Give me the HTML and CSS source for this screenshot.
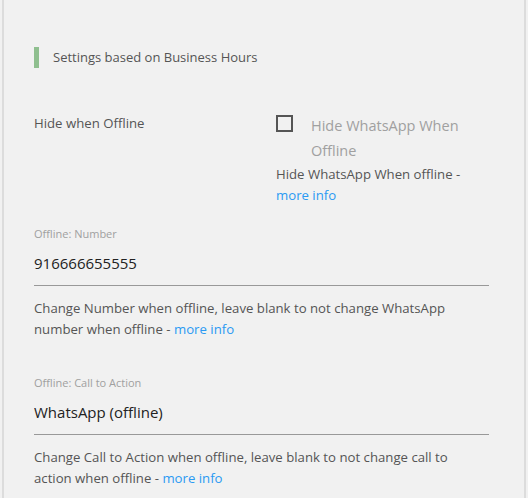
FILE: index.html
```html
<!DOCTYPE html>
<html>
<head>
    <title>Business Hours Settings</title>
    <link rel="stylesheet" href="styles.css">
</head>
<body>
    <div class="panel">
        <h3 class="section-title">Settings based on Business Hours</h3>

        <div class="row">
            <div class="row-label">Hide when Offline</div>
            <div class="row-field">
                <label class="check">
                    <input type="checkbox">
                    <span class="box"></span>
                    <span class="check-text">Hide WhatsApp When Offline</span>
                </label>
                <p class="help">Hide WhatsApp When offline - <a href="#">more info</a></p>
            </div>
        </div>

        <div class="field">
            <label class="field-label" for="offNumber">Offline: Number</label>
            <input class="field-input" type="text" id="offNumber" value="916666655555">
            <p class="help">Change Number when offline, leave blank to not change WhatsApp number when offline - <a href="#">more info</a></p>
        </div>

        <div class="field">
            <label class="field-label" for="offCta">Offline: Call to Action</label>
            <input class="field-input" type="text" id="offCta" value="WhatsApp (offline)">
            <p class="help">Change Call to Action when offline, leave blank to not change call to action when offline - <a href="#">more info</a></p>
        </div>
    </div>
</body>
</html>
```

FILE: styles.css
```css
body {
    margin: 0;
    background-color: #f1f1f1;
    font-family: "Open Sans", Arial, sans-serif;
    color: #555;
}
.panel {
    margin: 0 2px;
    border-left: 2px solid #dcdcdc;
    border-right: 2px solid #dcdcdc;
    padding: 47px 35px 0 30px;
    height: 498px;
    box-sizing: border-box;
}
.section-title {
    margin: 0;
    border-left: 5px solid #8fbf8f;
    padding-left: 14px;
    font-size: 13px;
    font-weight: normal;
    line-height: 21px;
    color: #555;
}
.row {
    display: grid;
    grid-template-columns: 242px 1fr;
    margin-top: 45px;
}
.row-label {
    font-size: 13.2px;
    line-height: 21px;
}
.check {
    display: flex;
    align-items: flex-start;
    cursor: pointer;
}
.check input {
    display: none;
}
.box {
    flex: none;
    width: 13px;
    height: 13px;
    border: 2px solid #555;
    margin-top: 2px;
    margin-right: 18px;
}
.check-text {
    font-size: 14.5px;
    line-height: 25px;
    color: #a0a0a0;
}
.help {
    margin: 1px 0 0;
    padding-right: 4px;
    font-size: 13.2px;
    line-height: 21px;
    color: #555;
}
.help a {
    color: #2b9af3;
    text-decoration: none;
}
.field {
    margin-top: 20px;
}
.field + .field {
    margin-top: 35px;
}
.field-label {
    display: block;
    font-size: 11px;
    line-height: 16px;
    color: #a0a0a0;
}
.field-input {
    display: block;
    width: 100%;
    box-sizing: border-box;
    border: none;
    border-bottom: 1px solid #999;
    background: transparent;
    padding: 9px 0 10px;
    font-family: "Open Sans", Arial, sans-serif;
    font-size: 15px;
    line-height: 24px;
    height: 44px;
    color: #222;
    outline: none;
}
.field .help {
    margin-top: 12px;
}
```
